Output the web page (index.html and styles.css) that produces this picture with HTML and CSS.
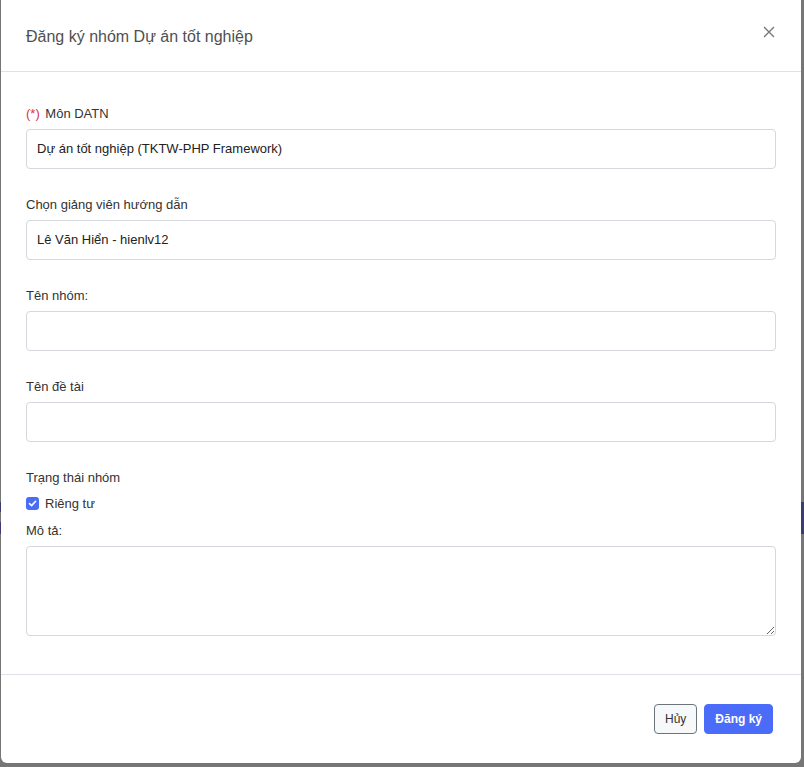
FILE: index.html
```html
<!DOCTYPE html>
<html lang="vi">
<head>
<meta charset="utf-8">
<title>Đăng ký nhóm</title>
<link rel="stylesheet" href="styles.css">
</head>
<body>
<div class="backdrop">
  <span class="bg-bar bg-bar-right"></span>
  <span class="bg-bar bg-bar-left1"></span>
  <span class="bg-bar bg-bar-left2"></span>
</div>
<div class="modal">
  <div class="modal-header">
    <h5 class="modal-title">Đăng ký nhóm Dự án tốt nghiệp</h5>
    <button class="close" type="button" aria-label="Close">
      <svg width="12" height="12" viewBox="0 0 12 12"><path d="M1 1L11 11M11 1L1 11" stroke="#777" stroke-width="1.4" fill="none"/></svg>
    </button>
  </div>
  <div class="modal-body">
    <div class="form-group">
      <label class="label"><span class="req">(*)</span> Môn DATN</label>
      <div class="input">Dự án tốt nghiệp (TKTW-PHP Framework)</div>
    </div>
    <div class="form-group">
      <label class="label">Chọn giảng viên hướng dẫn</label>
      <div class="input">Lê Văn Hiển - hienlv12</div>
    </div>
    <div class="form-group">
      <label class="label">Tên nhóm:</label>
      <div class="input"></div>
    </div>
    <div class="form-group">
      <label class="label">Tên đề tài</label>
      <div class="input"></div>
    </div>
    <div class="form-group status">
      <label class="label">Trạng thái nhóm</label>
      <div class="check-row">
        <span class="checkbox">
          <svg width="9" height="9" viewBox="0 0 9 9"><path d="M1.5 4.7L3.6 6.6L7.6 2.3" stroke="#fff" stroke-width="1.6" fill="none" stroke-linecap="round" stroke-linejoin="round"/></svg>
        </span>
        <span class="check-label">Riêng tư</span>
      </div>
      <label class="label desc-label">Mô tả:</label>
      <textarea class="textarea"></textarea>
    </div>
  </div>
  <div class="modal-footer">
    <button class="btn btn-cancel" type="button">Hủy</button>
    <button class="btn btn-primary" type="button">Đăng ký</button>
  </div>
</div>
</body>
</html>
```
FILE: styles.css
```css
html, body {
  margin: 0;
  padding: 0;
}
body {
  width: 804px;
  height: 767px;
  background: #767676;
  font-family: "Liberation Sans", Arial, sans-serif;
  overflow: hidden;
  position: relative;
}
.backdrop {
  position: absolute;
  inset: 0;
}
.bg-bar {
  position: absolute;
  display: block;
}
.bg-bar-right {
  right: 0;
  top: 502px;
  width: 3px;
  height: 32px;
  background: #3b3c72;
}
.bg-bar-left1 {
  left: 0;
  top: 502px;
  width: 1px;
  height: 10px;
  background: #3b3c72;
}
.bg-bar-left2 {
  left: 0;
  top: 522px;
  width: 1px;
  height: 12px;
  background: #3b3c72;
}
.modal {
  position: relative;
  margin-left: 1px;
  width: 800px;
  height: 763px;
  background: #fff;
  border-radius: 0 0 6px 6px;
  display: flex;
  flex-direction: column;
}
.modal-header {
  height: 72px;
  flex: none;
  box-sizing: border-box;
  border-bottom: 1px solid #dee2e6;
  display: flex;
  align-items: center;
  justify-content: space-between;
  padding: 2px 25px 0 25px;
}
.modal-title {
  margin: 0;
  font-size: 16px;
  font-weight: 400;
  color: #505050;
  line-height: 1;
}
.close {
  border: 0;
  background: transparent;
  padding: 0;
  width: 14px;
  height: 14px;
  display: flex;
  align-items: center;
  justify-content: center;
  margin-top: -9px;
}
.modal-body {
  padding: 33px 25px 0 25px;
  flex: 1;
}
.form-group {
  margin-bottom: 27px;
}
.label {
  display: block;
  font-size: 13px;
  line-height: 18px;
  color: #333;
  margin-bottom: 6px;
}
.req {
  color: #dc3545;
  margin-right: 2px;
}
.input {
  height: 40px;
  box-sizing: border-box;
  border: 1px solid #d4d7dc;
  border-radius: 4px;
  padding: 0 10px;
  font-size: 13px;
  line-height: 38px;
  color: #222;
}
.status .label {
  margin-bottom: 8px;
}
.check-row {
  display: flex;
  align-items: center;
  gap: 6px;
  height: 16px;
  margin-bottom: 11px;
}
.checkbox {
  width: 13px;
  height: 13px;
  border-radius: 3px;
  background: #4a6cf7;
  display: flex;
  align-items: center;
  justify-content: center;
}
.check-label {
  font-size: 13px;
  color: #333;
}
.status .desc-label {
  margin-bottom: 6px;
}
.textarea {
  display: block;
  width: 100%;
  height: 90px;
  box-sizing: border-box;
  border: 1px solid #d4d7dc;
  border-radius: 4px;
  margin: 0;
  resize: vertical;
  font-family: inherit;
}
.modal-footer {
  height: 89px;
  flex: none;
  box-sizing: border-box;
  border-top: 1px solid #dee2e6;
  display: flex;
  justify-content: flex-end;
  align-items: center;
  gap: 7px;
  padding: 0 28px 0 0;
}
.btn {
  height: 30px;
  border-radius: 4px;
  font-family: inherit;
  font-size: 12px;
  padding: 0 10px;
  cursor: pointer;
}
.btn-cancel {
  background: #f7f8fa;
  border: 1px solid #6c757d;
  color: #333;
}
.btn-primary {
  background: #4b6cf8;
  border: 1px solid #4b6cf8;
  color: #fff;
  font-weight: 700;
}
```
